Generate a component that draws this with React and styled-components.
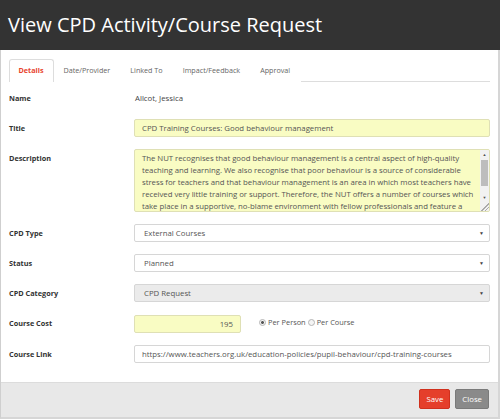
import React from "react";
import styled, { createGlobalStyle } from "styled-components";

const GlobalStyle = createGlobalStyle`
  html, body {
    margin: 0;
    padding: 0;
    background: #ffffff;
    font-family: "Open Sans", "Liberation Sans", sans-serif;
  }
`;

const tabs = ["Details", "Date/Provider", "Linked To", "Impact/Feedback", "Approval"];

const descriptionLines = [
  "The NUT recognises that good behaviour management is a central aspect of high-quality",
  "teaching and learning. We also recognise that poor behaviour is a source of considerable",
  "stress for teachers and that behaviour management is an area in which most teachers have",
  "received very little training or support. Therefore, the NUT offers a number of courses which",
  "take place in a supportive, no-blame environment with fellow professionals and feature a",
  "combination of practical strategies and guidance to help teachers manage behaviour.",
];

const App = () => {
  return (
    <>
      <GlobalStyle />
      <Modal>
        <Header>View CPD Activity/Course Request</Header>
        <Body>
          <TabBar>
            {tabs.map((t, i) => (
              <Tab key={t} active={i === 0}>
                {t}
              </Tab>
            ))}
          </TabBar>
          <Form>
            <Row>
              <Label>Name</Label>
              <PlainValue>Allcot, Jessica</PlainValue>
            </Row>
            <Row>
              <Label>Title</Label>
              <Input highlight>CPD Training Courses: Good behaviour management</Input>
            </Row>
            <Row>
              <Label>Description</Label>
              <TextArea>
                <TextBody>
                  {descriptionLines.map((l) => (
                    <TextLine key={l}>{l}</TextLine>
                  ))}
                </TextBody>
                <ScrollBar>
                  <ScrollArrow>▲</ScrollArrow>
                  <ScrollTrack>
                    <Thumb />
                  </ScrollTrack>
                  <ScrollArrow>▼</ScrollArrow>
                  <Grip />
                </ScrollBar>
              </TextArea>
            </Row>
            <Row>
              <Label>CPD Type</Label>
              <Select>
                External Courses
                <Caret>▼</Caret>
              </Select>
            </Row>
            <Row>
              <Label>Status</Label>
              <Select>
                Planned
                <Caret>▼</Caret>
              </Select>
            </Row>
            <Row>
              <Label>CPD Category</Label>
              <Select disabled>
                CPD Request
                <Caret>▼</Caret>
              </Select>
            </Row>
            <Row>
              <Label>Course Cost</Label>
              <CostGroup>
                <Input highlight align="right" width="107px">
                  195
                </Input>
                <RadioGroup>
                  <Radio checked />
                  <RadioText>Per Person</RadioText>
                  <Radio />
                  <RadioText>Per Course</RadioText>
                </RadioGroup>
              </CostGroup>
            </Row>
            <Row>
              <Label>Course Link</Label>
              <Input>
                https://www.teachers.org.uk/education-policies/pupil-behaviour/cpd-training-courses
              </Input>
            </Row>
          </Form>
        </Body>
        <Footer>
          <Button variant="save">Save</Button>
          <Button>Close</Button>
        </Footer>
      </Modal>
    </>
  );
};

const Modal = styled.div`
  width: 500px;
  height: 419px;
  box-sizing: border-box;
  border-left: 1px solid #cfcfcf;
  border-right: 2px solid #d6d6d6;
  border-bottom: 2px solid #d6d6d6;
  display: flex;
  flex-direction: column;
  background: #fff;
`;

const Header = styled.div`
  height: 50px;
  flex-shrink: 0;
  background: #333333;
  color: #ffffff;
  font-size: 20px;
  line-height: 50px;
  padding-left: 8px;
  margin-left: -1px;
  margin-right: -2px;
  white-space: nowrap;
`;

const Body = styled.div`
  padding: 9px 8px 0 8px;
  flex: 1;
`;

const TabBar = styled.div`
  display: flex;
  height: 22px;
  border-bottom: 1px solid #dddddd;
`;

const Tab = styled.div`
  height: 23px;
  box-sizing: border-box;
  padding: 0 9.5px 0 8.5px;
  font-size: 7.2px;
  line-height: 21px;
  color: ${(p) => (p.active ? "#e8432d" : "#666")};
  font-weight: ${(p) => (p.active ? 700 : 400)};
  border: 1px solid ${(p) => (p.active ? "#dddddd" : "transparent")};
  border-bottom: none;
  border-radius: 3px 3px 0 0;
  background: #fff;
`;

const Form = styled.div`
  display: flex;
  flex-direction: column;
  gap: 12px;
  padding-top: 7px;
`;

const Row = styled.div`
  display: flex;
  align-items: flex-start;
`;

const Label = styled.div`
  width: 125px;
  flex-shrink: 0;
  font-size: 7.3px;
  font-weight: 700;
  color: #333;
  padding-top: 4px;
  line-height: 10px;
`;

const PlainValue = styled.div`
  height: 18px;
  font-size: 7.8px;
  line-height: 18px;
  color: #444;
  padding-left: 1px;
`;

const Input = styled.div`
  width: ${(p) => p.width || "357px"};
  height: 18px;
  box-sizing: border-box;
  border: 1px solid ${(p) => (p.highlight ? "#dfe0b5" : "#d6d6d6")};
  border-radius: 2px;
  background: ${(p) => (p.highlight ? "#f9fcc3" : "#fff")};
  font-size: 7.8px;
  line-height: 16px;
  color: #555;
  padding: 0 7px;
  text-align: ${(p) => p.align || "left"};
  white-space: nowrap;
  overflow: hidden;
`;

const TextArea = styled.div`
  width: 357px;
  height: 63px;
  box-sizing: border-box;
  border: 1px solid #dfe0b5;
  border-radius: 2px;
  background: #f9fcc3;
  display: flex;
  overflow: hidden;
`;

const TextBody = styled.div`
  flex: 1;
  min-width: 0;
  height: 61px;
  padding: 2px 0 0 7px;
  font-size: 7.8px;
  letter-spacing: -0.03px;
  line-height: 12px;
  color: #555;
  overflow: hidden;
`;

const TextLine = styled.div`
  white-space: nowrap;
`;

const ScrollBar = styled.div`
  width: 9px;
  flex-shrink: 0;
  display: flex;
  flex-direction: column;
  align-items: center;
  background: #f2f2f2;
`;

const ScrollArrow = styled.div`
  height: 9px;
  font-size: 4px;
  line-height: 9px;
  color: #505050;
`;

const ScrollTrack = styled.div`
  flex: 1;
  width: 100%;
  display: flex;
  justify-content: center;
  padding-top: 1px;
`;

const Thumb = styled.div`
  width: 7px;
  height: 26px;
  background: #bdbdbd;
`;

const Grip = styled.div`
  height: 9px;
  width: 9px;
  background: linear-gradient(135deg, transparent 55%, #aaa 55%, #aaa 62%, transparent 62%, transparent 75%, #aaa 75%, #aaa 82%, transparent 82%);
`;

const Select = styled.div`
  width: 357px;
  height: 18px;
  box-sizing: border-box;
  border: 1px solid #d6d6d6;
  border-radius: 2px;
  background: ${(p) => (p.disabled ? "#ebebeb" : "#fff")};
  font-size: 7.8px;
  line-height: 16px;
  color: #555;
  padding: 0 5px 0 9px;
  display: flex;
  justify-content: space-between;
`;

const Caret = styled.span`
  font-size: 5px;
  color: #444;
`;

const CostGroup = styled.div`
  display: flex;
  align-items: center;
  height: 19px;
`;

const RadioGroup = styled.div`
  display: flex;
  align-items: center;
  margin-left: 18px;
  margin-top: -3px;
`;

const Radio = styled.span`
  width: 5px;
  height: 5px;
  border-radius: 50%;
  border: 1px solid #b5b5b5;
  background: ${(p) => (p.checked ? "radial-gradient(circle, #555 35%, #f4f4f4 45%)" : "#f4f4f4")};
  margin-right: 2px;
`;

const RadioText = styled.span`
  font-size: 7.4px;
  color: #555;
  margin-right: 2px;
`;

const Footer = styled.div`
  height: 35px;
  flex-shrink: 0;
  background: #e8e8e8;
  border-top: 1px solid #dcdcdc;
  box-sizing: border-box;
  display: flex;
  justify-content: flex-end;
  align-items: center;
  gap: 5px;
  padding-right: 9px;
`;

const Button = styled.div`
  height: 20px;
  box-sizing: border-box;
  padding: 0 6px;
  border-radius: 2px;
  font-size: 7.8px;
  line-height: 18px;
  color: #fff;
  background: ${(p) => (p.variant === "save" ? "#e53f2b" : "#8a8a8a")};
  border: 1px solid ${(p) => (p.variant === "save" ? "#d0301d" : "#7a7a7a")};
  margin-top: -2px;
`;

export default App;
